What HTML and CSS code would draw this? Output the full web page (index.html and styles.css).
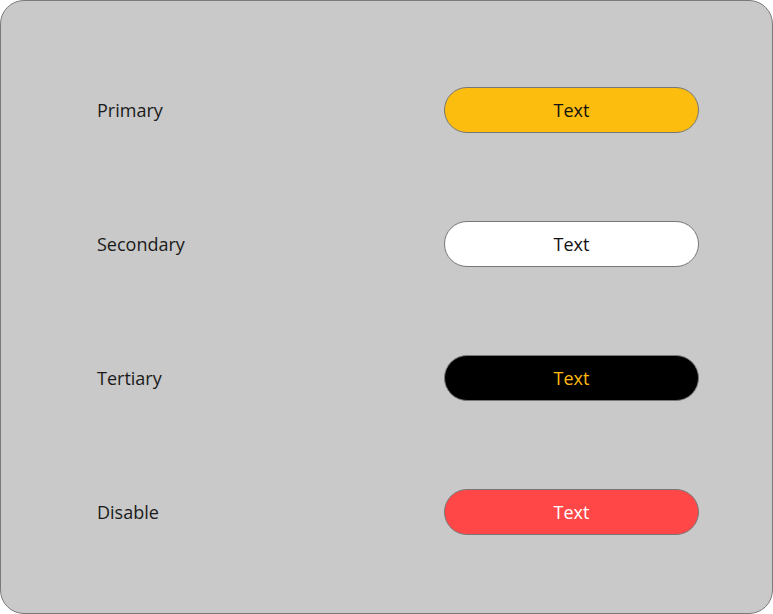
FILE: index.html
```html
<!DOCTYPE html>
<html>
<head>
<meta charset="utf-8">
<link rel="stylesheet" href="styles.css">
</head>
<body>
<div class="frame">
  <div class="row"><span class="label">Primary</span><button class="btn primary">Text</button></div>
  <div class="row"><span class="label">Secondary</span><button class="btn secondary">Text</button></div>
  <div class="row"><span class="label">Tertiary</span><button class="btn tertiary">Text</button></div>
  <div class="row"><span class="label">Disable</span><button class="btn disable">Text</button></div>
</div>
</body>
</html>
```
FILE: styles.css
```css
html, body { margin: 0; padding: 0; background: #ffffff; }
body { font-family: "Open Sans", "Noto Sans", sans-serif; }
.frame {
  box-sizing: border-box;
  width: 773px;
  height: 614px;
  background: #c9c9c9;
  border: 1px solid #7a7a7a;
  border-radius: 24px;
  padding: 42px 73px 0 96px;
  display: grid;
  grid-auto-rows: 134px;
  align-content: start;
}
.row {
  display: grid;
  grid-template-columns: 1fr 255px;
  align-items: center;
}
.label {
  font-size: 18px;
  color: #1a1a1a;
}
.btn {
  box-sizing: border-box;
  height: 46px;
  width: 255px;
  border-radius: 23px;
  border: 1px solid #777777;
  font-family: inherit;
  font-size: 18px;
  padding: 0;
  cursor: pointer;
}
.primary { background: #fdbd0e; color: #111111; }
.secondary { background: #ffffff; color: #111111; }
.tertiary { background: #000000; color: #fdb914; }
.disable { background: #ff4747; color: #ffffff; }
```
